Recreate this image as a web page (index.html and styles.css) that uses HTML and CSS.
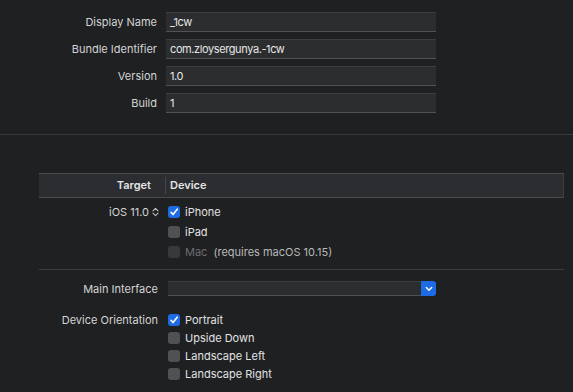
FILE: index.html
```html
<!DOCTYPE html>
<html lang="en">
<head>
    <meta charset="UTF-8">
    <meta name="viewport" content="width=device-width, initial-scale=1.0">
    <title>General</title>
    <link rel="stylesheet" href="styles.css">
</head>
<body>
    <!-- Identity -->
    <section class="identity">
        <label class="label">Display Name</label>
        <div class="field">_1cw</div>
        <label class="label">Bundle Identifier</label>
        <div class="field">com.zloysergunya.-1cw</div>
        <label class="label">Version</label>
        <div class="field">1.0</div>
        <label class="label">Build</label>
        <div class="field">1</div>
    </section>

    <hr class="divider">

    <!-- Deployment Info -->
    <section class="deployment">
        <div class="table-head">
            <div class="head-target">Target</div>
            <div class="head-device">Device</div>
        </div>

        <div class="rows">
            <div class="row">
                <div class="row-label">iOS 11.0
                    <svg class="stepper" width="7" height="10" viewBox="0 0 7 10">
                        <path d="M1 3.8 L3.5 1.3 L6 3.8 M1 6.2 L3.5 8.7 L6 6.2" fill="none" stroke="#bdbdbd" stroke-width="1.1" stroke-linecap="round" stroke-linejoin="round"/>
                    </svg>
                </div>
                <div class="check checked">iPhone</div>
            </div>
            <div class="row">
                <div class="row-label"></div>
                <div class="check">iPad</div>
            </div>
            <div class="row">
                <div class="row-label"></div>
                <div class="check disabled">Mac <span class="note">(requires macOS 10.15)</span></div>
            </div>
        </div>

        <hr class="divider short">

        <div class="row popup-row">
            <div class="row-label">Main Interface</div>
            <div class="popup">
                <div class="popup-field"></div>
                <div class="popup-button">
                    <svg width="8" height="6" viewBox="0 0 8 6">
                        <path d="M1.3 1.6 L4 4.2 L6.7 1.6" fill="none" stroke="#fff" stroke-width="1.4" stroke-linecap="round" stroke-linejoin="round"/>
                    </svg>
                </div>
            </div>
        </div>

        <div class="orientation">
            <div class="row short-row">
                <div class="row-label">Device Orientation</div>
                <div class="check checked">Portrait</div>
            </div>
            <div class="row short-row">
                <div class="row-label"></div>
                <div class="check">Upside Down</div>
            </div>
            <div class="row short-row">
                <div class="row-label"></div>
                <div class="check">Landscape Left</div>
            </div>
            <div class="row short-row">
                <div class="row-label"></div>
                <div class="check">Landscape Right</div>
            </div>
        </div>
    </section>
</body>
</html>
```

FILE: styles.css
```css
body {
    margin: 0;
    background: #1f2022;
    color: #dcdcdc;
    font-family: 'Inter', 'Liberation Sans', sans-serif;
    font-size: 11px;
    overflow: hidden;
}
.identity {
    display: grid;
    grid-template-columns: 157px 270px;
    column-gap: 9px;
    row-gap: 7px;
    padding-top: 12px;
}
.label {
    text-align: right;
    align-self: center;
    color: #d4d4d4;
}
.field {
    height: 18px;
    line-height: 18px;
    padding: 0 4px;
    background: #2c2d2f;
    border-top: 1px solid #3c3d3f;
    border-bottom: 1px solid #505153;
    color: #e6e6e6;
    letter-spacing: -0.4px;
}
.divider {
    border: none;
    border-top: 1px solid #38393b;
    margin: 21px 0 0;
}
.deployment {
    margin: 38px 9px 0 39px;
}
.table-head {
    display: grid;
    grid-template-columns: 127px 1fr;
    height: 23px;
    background: #2b2d30;
    border-top: 1px solid #4a4b4d;
    border-bottom: 1px solid #4a4b4d;
    border-right: 1px solid #3e3f41;
    font-weight: 600;
    color: #e4e4e4;
}
.head-target {
    text-align: right;
    padding-right: 14px;
    border-right: 1px solid #45464a;
    margin: 3px 0;
    line-height: 17px;
}
.head-device {
    padding-left: 4px;
    line-height: 23px;
}
.rows {
    padding-top: 4px;
}
.row {
    display: grid;
    grid-template-columns: 119px 1fr;
    column-gap: 10px;
    height: 20px;
    align-items: center;
}
.short-row {
    height: 18px;
}
.row-label {
    display: flex;
    justify-content: flex-end;
    align-items: center;
    gap: 3px;
    color: #d4d4d4;
}
.stepper {
    margin-right: -1px;
}
.check {
    display: flex;
    align-items: center;
    gap: 5px;
    color: #e2e2e2;
}
.check::before {
    content: "";
    width: 12px;
    height: 12px;
    border-radius: 3px;
    background: #505153;
    flex: none;
}
.check.checked::before {
    background: #1d6ce6 url("data:image/svg+xml,%3Csvg xmlns='http://www.w3.org/2000/svg' width='12' height='12' viewBox='0 0 12 12'%3E%3Cpath d='M3 6.3 L5 8.6 L9.2 3.2' fill='none' stroke='white' stroke-width='1.6' stroke-linecap='round' stroke-linejoin='round'/%3E%3C/svg%3E") no-repeat center;
}
.check.disabled {
    color: #6c6c6e;
}
.check.disabled::before {
    background: #38393b;
}
.note {
    color: #b8b8b8;
    margin-left: 1px;
}
.divider.short {
    margin-top: 7px;
    border-top-color: #3c3d3f;
}
.popup-row {
    margin-top: 11px;
    height: 15px;
}
.popup {
    display: flex;
    width: 268px;
    height: 15px;
}
.popup-field {
    flex: 1;
    background: #2c2d2f;
    border-top: 1px solid #3c3d3f;
    border-bottom: 1px solid #505153;
}
.popup-button {
    width: 15px;
    height: 15px;
    background: #1d6ce6;
    border-radius: 0 3px 3px 0;
    display: flex;
    align-items: center;
    justify-content: center;
}
.orientation {
    margin-top: 15px;
}
```
